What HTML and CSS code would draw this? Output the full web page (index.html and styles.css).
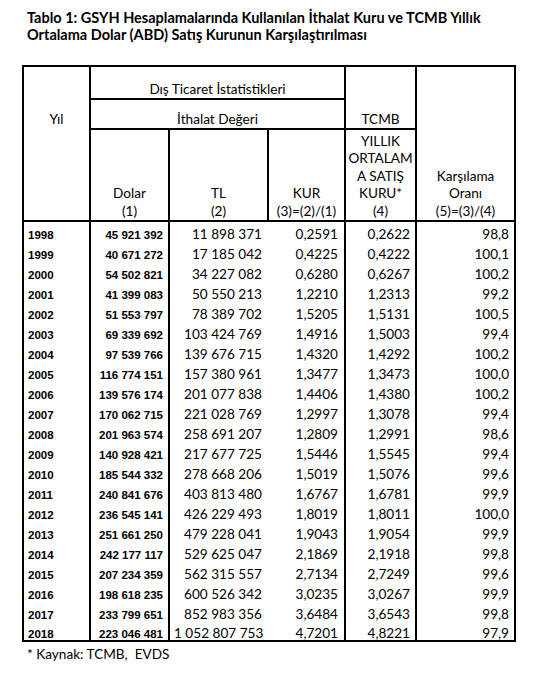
FILE: index.html
```html
<!DOCTYPE html>
<html lang="tr">
<head>
<meta charset="utf-8">
<title>Tablo 1</title>
<link rel="stylesheet" href="styles.css">
</head>
<body>
<div class="page">
<h1 class="title">Tablo 1: GSYH Hesaplamalarında Kullanılan İthalat Kuru ve TCMB Yıllık<br>Ortalama Dolar (ABD) Satış Kurunun Karşılaştırılması</h1>
<table class="grid">
<colgroup><col class="c-yil"><col class="c-dolar"><col class="c-tl"><col class="c-kur"><col class="c-tcmb"><col class="c-oran"></colgroup>
<thead>
<tr class="h1"><th rowspan="3" class="yil">Yıl</th><th colspan="3">Dış Ticaret İstatistikleri</th><th rowspan="2">TCMB</th><th rowspan="3">Karşılama<br>Oranı<br>(5)=(3)/(4)</th></tr>
<tr class="h2"><th colspan="3">İthalat Değeri</th></tr>
<tr class="h3"><th>Dolar<br>(1)</th><th>TL<br>(2)</th><th>KUR<br>(3)=(2)/(1)</th><th>YILLIK<br>ORTALAM<br>A SATIŞ<br>KURU*<br>(4)</th></tr>
</thead>
<tbody>
<tr><td class="y">1998</td><td class="d">45 921 392</td><td class="tl">11 898 371</td><td class="kur">0,2591</td><td class="n">0,2622</td><td class="n">98,8</td></tr>
<tr><td class="y">1999</td><td class="d">40 671 272</td><td class="tl">17 185 042</td><td class="kur">0,4225</td><td class="n">0,4222</td><td class="n">100,1</td></tr>
<tr><td class="y">2000</td><td class="d">54 502 821</td><td class="tl">34 227 082</td><td class="kur">0,6280</td><td class="n">0,6267</td><td class="n">100,2</td></tr>
<tr><td class="y">2001</td><td class="d">41 399 083</td><td class="tl">50 550 213</td><td class="kur">1,2210</td><td class="n">1,2313</td><td class="n">99,2</td></tr>
<tr><td class="y">2002</td><td class="d">51 553 797</td><td class="tl">78 389 702</td><td class="kur">1,5205</td><td class="n">1,5131</td><td class="n">100,5</td></tr>
<tr><td class="y">2003</td><td class="d">69 339 692</td><td class="tl">103 424 769</td><td class="kur">1,4916</td><td class="n">1,5003</td><td class="n">99,4</td></tr>
<tr><td class="y">2004</td><td class="d">97 539 766</td><td class="tl">139 676 715</td><td class="kur">1,4320</td><td class="n">1,4292</td><td class="n">100,2</td></tr>
<tr><td class="y">2005</td><td class="d">116 774 151</td><td class="tl">157 380 961</td><td class="kur">1,3477</td><td class="n">1,3473</td><td class="n">100,0</td></tr>
<tr><td class="y">2006</td><td class="d">139 576 174</td><td class="tl">201 077 838</td><td class="kur">1,4406</td><td class="n">1,4380</td><td class="n">100,2</td></tr>
<tr><td class="y">2007</td><td class="d">170 062 715</td><td class="tl">221 028 769</td><td class="kur">1,2997</td><td class="n">1,3078</td><td class="n">99,4</td></tr>
<tr><td class="y">2008</td><td class="d">201 963 574</td><td class="tl">258 691 207</td><td class="kur">1,2809</td><td class="n">1,2991</td><td class="n">98,6</td></tr>
<tr><td class="y">2009</td><td class="d">140 928 421</td><td class="tl">217 677 725</td><td class="kur">1,5446</td><td class="n">1,5545</td><td class="n">99,4</td></tr>
<tr><td class="y">2010</td><td class="d">185 544 332</td><td class="tl">278 668 206</td><td class="kur">1,5019</td><td class="n">1,5076</td><td class="n">99,6</td></tr>
<tr><td class="y">2011</td><td class="d">240 841 676</td><td class="tl">403 813 480</td><td class="kur">1,6767</td><td class="n">1,6781</td><td class="n">99,9</td></tr>
<tr><td class="y">2012</td><td class="d">236 545 141</td><td class="tl">426 229 493</td><td class="kur">1,8019</td><td class="n">1,8011</td><td class="n">100,0</td></tr>
<tr><td class="y">2013</td><td class="d">251 661 250</td><td class="tl">479 228 041</td><td class="kur">1,9043</td><td class="n">1,9054</td><td class="n">99,9</td></tr>
<tr><td class="y">2014</td><td class="d">242 177 117</td><td class="tl">529 625 047</td><td class="kur">2,1869</td><td class="n">2,1918</td><td class="n">99,8</td></tr>
<tr><td class="y">2015</td><td class="d">207 234 359</td><td class="tl">562 315 557</td><td class="kur">2,7134</td><td class="n">2,7249</td><td class="n">99,6</td></tr>
<tr><td class="y">2016</td><td class="d">198 618 235</td><td class="tl">600 526 342</td><td class="kur">3,0235</td><td class="n">3,0267</td><td class="n">99,9</td></tr>
<tr><td class="y">2017</td><td class="d">233 799 651</td><td class="tl">852 983 356</td><td class="kur">3,6484</td><td class="n">3,6543</td><td class="n">99,8</td></tr>
<tr class="last"><td class="y">2018</td><td class="d">223 046 481</td><td class="tl">1 052 807 753</td><td class="kur">4,7201</td><td class="n">4,8221</td><td class="n">97,9</td></tr>
</tbody>
</table>
<p class="note">* Kaynak: TCMB,&nbsp; EVDS</p>
</div>
</body>
</html>
```

FILE: styles.css
```css
html, body {
  margin: 0;
  padding: 0;
  background: #ffffff;
}

body {
  font-family: Lato, "Noto Sans", sans-serif;
  color: #000000;
}

.page {
  padding: 9px 0 0 22px;
}

.title {
  margin: 0 0 22px 5px;
  font-size: 14.5px;
  font-weight: 700;
  line-height: 17px;
}

.grid {
  border-collapse: collapse;
  table-layout: fixed;
  width: 492px;
  font-size: 13.6px;
}

.c-yil { width: 67px; }
.c-dolar { width: 79px; }
.c-tl { width: 99px; }
.c-kur { width: 77px; }
.c-tcmb { width: 71px; }
.c-oran { width: 99px; }

.grid th {
  border: 2px solid #000;
  font-weight: 400;
  text-align: center;
  vertical-align: bottom;
  line-height: 17.5px;
  padding: 0;
}

.grid th.yil {
  vertical-align: top;
  padding-top: 44px;
}

.h1 { height: 33px; }
.h2 { height: 30px; }
.h3 { height: 92px; }

.grid tbody tr {
  height: 20px;
}

.grid td {
  border-left: 2px solid #000;
  border-right: 2px solid #000;
  padding: 0 5px 0 4px;
  text-align: right;
  vertical-align: bottom;
  line-height: 13px;
  white-space: nowrap;
}

.grid td.y,
.grid td.d {
  font-family: "Liberation Sans", Arial, sans-serif;
  font-weight: 700;
  font-size: 11.5px;
  line-height: 12px;
}

.grid td.y {
  text-align: left;
}

.grid td.tl {
  border-right: none;
  padding-right: 6px;
}

.grid td.kur {
  border-left: none;
  padding-right: 6px;
}

.grid tr.last td {
  border-bottom: 2px solid #000;
}

.note {
  margin: 4px 0 0 5px;
  font-size: 13.6px;
  line-height: 17px;
}
```
